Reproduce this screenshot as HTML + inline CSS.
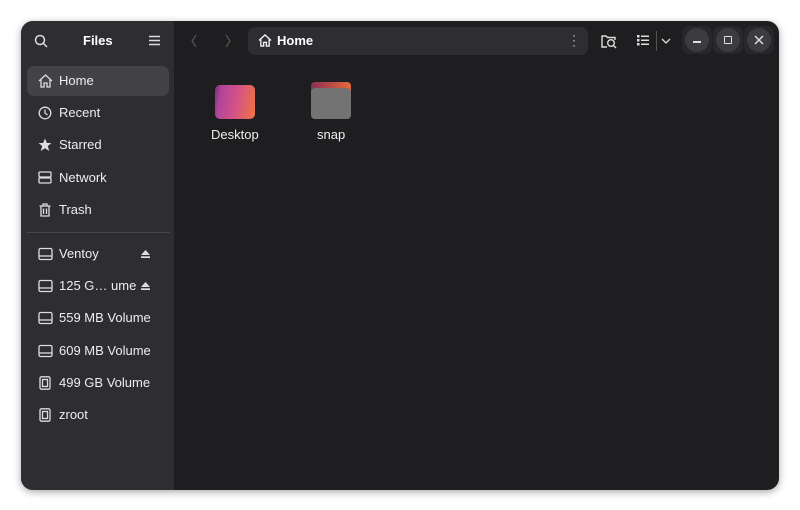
<!DOCTYPE html><html><head><style>
body{margin:0;width:800px;height:510px;background:#fff;font-family:"Liberation Sans","DejaVu Sans",sans-serif;position:relative;overflow:hidden}
.win{position:absolute;left:21px;top:21px;width:758px;height:469px;border-radius:12px;background:#1e1e20;overflow:hidden;box-shadow:0 2px 8px rgba(0,0,0,.35)}
.side{position:absolute;left:0;top:0;width:153px;height:100%;background:#2e2e32}
.t{position:absolute;color:#fff;font-size:13px}
.row{position:absolute;left:6px;width:142px;height:30px;border-radius:7px;color:#eee;font-size:13px}
.row span{position:absolute;left:32px;top:7px}
.row svg{position:absolute;left:11px;top:8px}
.ej{position:absolute;left:114px;top:11px}
.sel{background:#434347}
.btn{position:absolute;top:7px;width:24px;height:24px;border-radius:12px;background:#3c3c40}
.btnbox{position:absolute;top:5px;width:30px;height:28px;border-radius:7px;background:#28282c}
</style></head><body><div class="win">
<div class="side">
<svg style="position:absolute;left:13px;top:13px" width="14" height="14" viewBox="0 0 14 14" fill="none" stroke="#ddd" stroke-width="1.5"><circle cx="6" cy="6" r="4.5"/><path d="M9.5 9.5L13 13"/></svg>
<div class="t" style="left:62px;top:12px;font-weight:bold;font-size:13px">Files</div>
<svg style="position:absolute;left:128px;top:14px" width="11" height="11" viewBox="0 0 11 11" stroke="#ddd" stroke-width="1.4"><path d="M0 1.5H11M0 5.5H11M0 9.5H11"/></svg>
<div class="row sel" style="top:45px"><svg width="15" height="14" viewBox="0 0 15 14" fill="none" stroke="#ddd" stroke-width="1.3"><path d="M1 7L7.5 1L14 7M3 5.5V13H6V9H9V13H12V5.5"/></svg><span>Home</span></div>
<div class="row" style="top:77px"><svg width="14" height="14" viewBox="0 0 14 14" fill="none" stroke="#ddd" stroke-width="1.3"><circle cx="7" cy="7" r="5.8"/><path d="M7 3.5V7L9.5 9"/></svg><span>Recent</span></div>
<div class="row" style="top:109px"><svg width="14" height="14" viewBox="0 0 14 14"><path d="M7 .5L8.9 5H13.5L9.8 8L11.2 13L7 10.2L2.8 13L4.2 8L.5 5H5.1Z" fill="#ddd"/></svg><span>Starred</span></div>
<div class="row" style="top:142px"><svg width="14" height="14" viewBox="0 0 14 14" fill="none" stroke="#ddd" stroke-width="1.3"><rect x="1" y="1" width="12" height="5" rx="1"/><rect x="1" y="7" width="12" height="5" rx="1"/></svg><span>Network</span></div>
<div class="row" style="top:174px"><svg width="14" height="14" viewBox="0 0 14 14" fill="none" stroke="#ddd" stroke-width="1.3"><path d="M1.5 3H12.5M5 3V1H9V3M3 3V13H11V3M5.5 5.5V11M8.5 5.5V11"/></svg><span>Trash</span></div>
<div style="position:absolute;left:6px;top:211px;width:143px;height:1px;background:#47474b"></div>
<div class="row" style="top:218px"><svg width="15" height="14" viewBox="0 0 15 14" fill="none" stroke="#ddd" stroke-width="1.3"><rect x="1" y="1.5" width="13" height="11" rx="1.5"/><path d="M1 9H14"/></svg><span>Ventoy</span><svg class="ej" style="left:114px;top:11px" width="9" height="8" viewBox="0 0 9 8" fill="#ddd"><path d="M4.5 0L9 5H0Z"/><rect y="6.3" width="9" height="1.7"/></svg></div>
<div class="row" style="top:250px"><svg width="15" height="14" viewBox="0 0 15 14" fill="none" stroke="#ddd" stroke-width="1.3"><rect x="1" y="1.5" width="13" height="11" rx="1.5"/><path d="M1 9H14"/></svg><span>125 G… ume</span><svg class="ej" style="left:114px;top:11px" width="9" height="8" viewBox="0 0 9 8" fill="#ddd"><path d="M4.5 0L9 5H0Z"/><rect y="6.3" width="9" height="1.7"/></svg></div>
<div class="row" style="top:282px"><svg width="15" height="14" viewBox="0 0 15 14" fill="none" stroke="#ddd" stroke-width="1.3"><rect x="1" y="1.5" width="13" height="11" rx="1.5"/><path d="M1 9H14"/></svg><span>559 MB Volume</span></div>
<div class="row" style="top:315px"><svg width="15" height="14" viewBox="0 0 15 14" fill="none" stroke="#ddd" stroke-width="1.3"><rect x="1" y="1.5" width="13" height="11" rx="1.5"/><path d="M1 9H14"/></svg><span>609 MB Volume</span></div>
<div class="row" style="top:347px"><svg width="14" height="14" viewBox="0 0 14 14" fill="none" stroke="#ddd" stroke-width="1.3"><rect x="2" y=".8" width="10" height="12.4" rx="1.5"/><rect x="4.5" y="3.5" width="5" height="7"/></svg><span>499 GB Volume</span></div>
<div class="row" style="top:379px"><svg width="14" height="14" viewBox="0 0 14 14" fill="none" stroke="#ddd" stroke-width="1.3"><rect x="2" y=".8" width="10" height="12.4" rx="1.5"/><rect x="4.5" y="3.5" width="5" height="7"/></svg><span>zroot</span></div>
</div>
<svg style="position:absolute;left:169px;top:13px" width="8" height="14" viewBox="0 0 8 14" fill="none" stroke="#555" stroke-width="1.2"><path d="M6 1L2 7L6 13"/></svg>
<svg style="position:absolute;left:203px;top:13px" width="8" height="14" viewBox="0 0 8 14" fill="none" stroke="#555" stroke-width="1.2"><path d="M2 1L6 7L2 13"/></svg>
<div style="position:absolute;left:227px;top:6px;width:340px;height:28px;border-radius:7px;background:#2e2e32"></div>
<svg style="position:absolute;left:237px;top:13px" width="14" height="13" viewBox="0 0 15 14" fill="none" stroke="#eee" stroke-width="1.5"><path d="M1 7L7.5 1L14 7M3 5.5V13H6V9H9V13H12V5.5"/></svg>
<div class="t" style="left:256px;top:12px;font-weight:bold">Home</div>
<div style="position:absolute;left:551px;top:12px;color:#ddd;font-size:12px;line-height:5px">·<br>·<br>·</div>
<svg style="position:absolute;left:580px;top:13px" width="16" height="15" viewBox="0 0 16 15" fill="none" stroke="#ddd" stroke-width="1.4"><path d="M6 13H1V2H5L6.5 3.5H14V6"/><circle cx="10" cy="9" r="3.3"/><path d="M12.5 11.5L15 14"/></svg>
<svg style="position:absolute;left:616px;top:14px" width="12" height="11" viewBox="0 0 12 11" fill="#ddd"><rect x="0" y="0" width="2.5" height="2.5"/><rect x="0" y="4" width="2.5" height="2.5"/><rect x="0" y="8" width="2.5" height="2.5"/><rect x="4" y=".5" width="8" height="1.5"/><rect x="4" y="4.5" width="8" height="1.5"/><rect x="4" y="8.5" width="8" height="1.5"/></svg>
<div style="position:absolute;left:635px;top:10px;width:1px;height:20px;background:#555"></div>
<svg style="position:absolute;left:640px;top:17px" width="10" height="6" viewBox="0 0 10 6" fill="none" stroke="#ddd" stroke-width="1.3"><path d="M1 1L5 5L9 1"/></svg>
<div class="btnbox" style="left:661px"></div><div class="btnbox" style="left:692px"></div><div class="btnbox" style="left:723px"></div>
<div class="btn" style="left:664px"></div><div class="btn" style="left:695px"></div><div class="btn" style="left:726px"></div>
<div style="position:absolute;left:672px;top:20px;width:8px;height:1.5px;background:#ddd"></div>
<div style="position:absolute;left:703px;top:15px;width:6px;height:6px;border:1.4px solid #ddd;border-radius:1px"></div>
<svg style="position:absolute;left:733px;top:14px" width="10" height="10" viewBox="0 0 10 10" stroke="#ddd" stroke-width="1.5"><path d="M1 1L9 9M9 1L1 9"/></svg>
<div style="position:absolute;left:194px;top:64px;width:40px;height:34px;border-radius:5px;background:linear-gradient(100deg,#7b2e6a 0%,#b0459a 15%,#d2508a 50%,#f07540 100%)"></div>
<div style="position:absolute;left:290px;top:61px;width:40px;height:37px;border-radius:4px;background:linear-gradient(90deg,#8a2e55,#e8693a)"></div>
<div style="position:absolute;left:290px;top:67px;width:40px;height:31px;border-radius:4px;background:#737373"></div>
<div class="t" style="left:190px;top:106px;color:#eee">Desktop</div>
<div class="t" style="left:296px;top:106px;color:#eee">snap</div>
</div></body></html>
